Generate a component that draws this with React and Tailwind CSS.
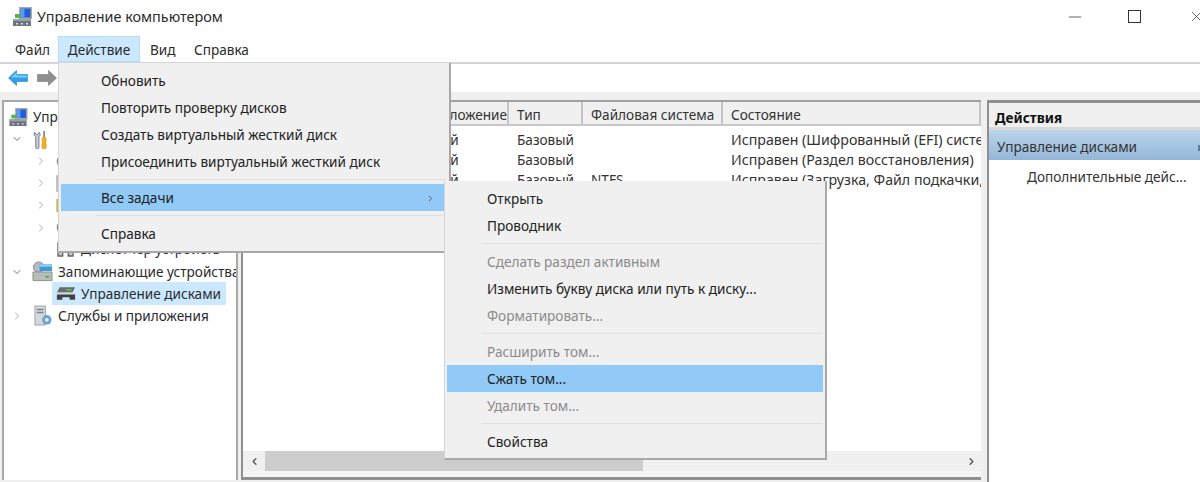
import React from "react";
import { ChevronDown, ChevronRight, ChevronLeft, Minus, X } from "lucide-react";

// --- Icons ---
const ComputerIcon = ({ className }) => (
  <svg viewBox="0 0 20 21" className={className}>
    <rect x="7" y="1" width="13" height="12" fill="#a9a9a0" />
    <rect x="8.5" y="2.5" width="10" height="9" fill="#1f5fd8" />
    <path d="M8.5 2.5h4v9h-4z" fill="#5b9bf0" />
    <path d="M3 8h5v4H3z" fill="#5fb04f" />
    <path d="M1 13h18v7H1z" fill="#6c7480" />
    <path d="M1 13h18v2H1z" fill="#9aa3ad" />
    <path d="M4 17h2v1.500H4zM9 17h2v1.500H9zM14 17h2v1.500h-2z" fill="#d8dde2" />
  </svg>
);

const ToolsIcon = ({ className }) => (
  <svg viewBox="0 0 16 21" className={className}>
    <path d="M1.500 2.500 3 5l2 0 1.500-2.500C8 4 8 6.500 6.300 7.500V19a1.800 1.800 0 0 1-3.600 0V7.500C1 6.500 .5 4 1.500 2.500z" fill="#c9ccd0" stroke="#74787d" strokeWidth="1" />
    <path d="M11 1h2v7h-2z" fill="#8a8d90" />
    <path d="M10.500 8h3l1 2.500-.6 2 .6 6.500a2.500 2 0 0 1-5 0l.6-6.500-.6-2z" fill="#f0b020" stroke="#c98a10" strokeWidth=".6" />
  </svg>
);

const StorageIcon = ({ className }) => (
  <svg viewBox="0 0 22 21" className={className}>
    <circle cx="7" cy="6" r="5.500" fill="#b4bbc0" stroke="#7f878d" />
    <path d="M8 3h13v7H8z" fill="#3f9bd8" />
    <path d="M8 3h13v2.500H8z" fill="#8fd0f0" />
    <path d="M1 11h20v9H1z" fill="#b9bdb8" stroke="#8c908c" />
    <path d="M14 15h4v2h-4z" fill="#4fb04a" />
  </svg>
);

const DiskIcon = ({ className }) => (
  <svg viewBox="0 0 22 16" className={className}>
    <path d="M4 1h17l-3 6H1z" fill="#6a6d70" />
    <path d="M11 3h6v2h-6z" fill="#55c050" />
    <path d="M2 7h18v2H2z" fill="#d5d8da" />
    <path d="M1 9h20v6h-6v-3H7v3H1z" fill="#3f4245" />
  </svg>
);

const ServicesIcon = ({ className }) => (
  <svg viewBox="0 0 20 22" className={className}>
    <path d="M1 1h11v20H1z" fill="#d5d9dd" stroke="#9aa0a5" />
    <path d="M3 4h7v1.500H3zM3 7h7v1.500H3z" fill="#7d858c" />
    <circle cx="13.500" cy="15.500" r="5" fill="#6ea4d0" />
    <circle cx="13.500" cy="15.500" r="2" fill="#e6eef5" />
  </svg>
);

const FolderIcon = ({ className }) => (
  <svg viewBox="0 0 18 16" className={className}>
    <path d="M1 2h6l2 2h8v11H1z" fill="#e8c860" stroke="#b89a3a" />
  </svg>
);

const ClockIcon = ({ className }) => (
  <svg viewBox="0 0 18 18" className={className}>
    <circle cx="9" cy="9" r="7.500" fill="#e8e8e8" stroke="#8a8a8a" strokeWidth="1.500" />
  </svg>
);

const ViewerIcon = ({ className }) => (
  <svg viewBox="0 0 18 18" className={className}>
    <rect x="1" y="1" width="15" height="16" fill="#ececec" stroke="#8a8a8a" />
  </svg>
);

const DeviceIcon = ({ className }) => (
  <svg viewBox="0 0 18 16" className={className}>
    <path d="M1 1h16v14h-5v-5H6v5H1z" fill="#c8c8c8" stroke="#666" strokeWidth="1.500" />
  </svg>
);

const BackArrow = () => (
  <svg viewBox="0 0 20 16" className="w-5 h-4">
    <path d="M0.500 8 8.500 .5v4h11v7h-11v4z" fill="#2f9fea" stroke="#1c85d2" strokeWidth=".6" />
    <path d="M3 7.500 8.500 2.500v3h10.500v2z" fill="#7dcbf8" />
  </svg>
);

const ForwardArrow = () => (
  <svg viewBox="0 0 20 16" className="w-5 h-4">
    <path d="M19.500 8 11.500 .5v4H.5v7h11v4z" fill="#8f8f8f" stroke="#777" strokeWidth=".6" />
  </svg>
);

// --- Data ---
const COLUMNS = [
  { label: "Том", width: "w-[152px]", pad: "pl-[8px]" },
  { label: "Расположение", width: "w-[114px]", pad: "pl-[16px]" },
  { label: "Тип", width: "w-[74px]", pad: "pl-[8px]" },
  { label: "Файловая система", width: "w-[140px]", pad: "pl-[8px]" },
  { label: "Состояние", width: "flex-1", pad: "pl-[8px]" },
];

const VOLUMES = [
  ["(Диск 0 раздел 1)", "Простой", "Базовый", "", "Исправен (Шифрованный (EFI) системный раздел)"],
  ["(Диск 0 раздел 4)", "Простой", "Базовый", "", "Исправен (Раздел восстановления)"],
  ["(C:)", "Простой", "Базовый", "NTFS", "Исправен (Загрузка, Файл подкачки, Аварийный дамп)"],
];

const MENU_ACTION = [
  { label: "Обновить" },
  { label: "Повторить проверку дисков" },
  { label: "Создать виртуальный жесткий диск" },
  { label: "Присоединить виртуальный жесткий диск" },
  { sep: true },
  { label: "Все задачи", active: true, arrow: true },
  { sep: true },
  { label: "Справка" },
];

const MENU_TASKS = [
  { label: "Открыть" },
  { label: "Проводник" },
  { sep: true },
  { label: "Сделать раздел активным", disabled: true },
  { label: "Изменить букву диска или путь к диску..." },
  { label: "Форматировать...", disabled: true },
  { sep: true },
  { label: "Расширить том...", disabled: true },
  { label: "Сжать том...", active: true },
  { label: "Удалить том...", disabled: true },
  { sep: true },
  { label: "Свойства" },
];

const Menu = ({ items, className }) => (
  <div className={`absolute z-10 bg-[#f0f0f0] border-r-2 border-b-2 border-l border-[#a8a8a8] border-l-[#d4d4d4] pt-[4px] pb-[3px] px-[2px] ${className}`}>
    {items.map((item, i) =>
      item.sep ? (
        <div key={i} className="h-[9px] flex items-center pl-[35px] pr-[1px]">
          <div className="h-px w-full bg-[#e0e0e0]" />
        </div>
      ) : (
        <div
          key={i}
          className={`relative h-[27px] flex items-center pl-[40px] pt-px ${item.active ? "bg-[#91c9f7]" : ""} ${item.disabled ? "text-[#8b8b8b]" : "text-[#222]"}`}
        >
          {item.label}
          {item.arrow && <ChevronRight size={9} strokeWidth={2.5} className="absolute right-[12px] text-[#555]" />}
        </div>
      )
    )}
  </div>
);

const TreeRow = ({ indent, chevron, icon, label, labelClass = "pl-[5px]" }) => (
  <div className={`h-[22.1px] flex items-center whitespace-nowrap ${indent}`}>
    <span className="w-[21px] -ml-[4px] shrink-0 text-[#777]">
      {chevron === "open" && <ChevronDown size={12} strokeWidth={2} />}
      {chevron === "closed" && <ChevronRight size={12} strokeWidth={2} className="text-[#aaa]" />}
    </span>
    {icon}
    <span className={labelClass}>{label}</span>
  </div>
);

export default function App() {
  return (
    <div className="relative w-[1200px] h-[482px] overflow-hidden bg-[#f0f0f0] font-['Noto_Sans',sans-serif] text-[13.6px] text-[#2b2b2b]">
      {/* Title bar */}
      <div className="h-[36px] bg-white flex items-center pl-[12px] pb-[3px]">
        <ComputerIcon className="w-[20px] h-[21px]" />
        <span className="ml-[5px] text-[14.4px]">Управление компьютером</span>
        <div className="ml-auto flex items-center text-[#333]">
          <Minus size={16} strokeWidth={1} className="mr-[45px] scale-x-125" />
          <div className="w-[13px] h-[13px] border border-[#333] mr-[47px]" />
          <X size={17} strokeWidth={1} className="-mr-[5px]" />
        </div>
      </div>

      {/* Menu bar */}
      <div className="h-[28px] bg-white flex items-center border-b-2 border-[#d5d5d5] pl-[15px] pt-[3px]">
        <span className="w-[43px]">Файл</span>
        <span className="self-start -mt-[3px] h-[26px] w-[82px] pt-[2px] flex items-center justify-center bg-[#cce8ff] border border-[#b5dcfa]">Действие</span>
        <span className="ml-[10px] w-[44px]">Вид</span>
        <span>Справка</span>
      </div>

      {/* Toolbar */}
      <div className="h-[28px] bg-white flex items-center pl-[8px] gap-[9px]">
        <BackArrow />
        <ForwardArrow />
      </div>

      {/* Panels */}
      <div className="h-[390px] pt-[8px] flex">
        <div className="w-[236px] ml-[2px] mr-[3px] mb-[2px] bg-white border-l-2 border-t-2 border-r-2 border-[#a8a8a8] pl-[2px] pt-[4px] overflow-hidden">
          <TreeRow indent="pl-0" icon={<ComputerIcon className="w-[20px] h-[20px] -ml-[15px] shrink-0" />} label="Управление компьютером (локальным)" />
          <TreeRow indent="pl-[9px]" chevron="open" icon={<ToolsIcon className="w-[15px] h-[19px] ml-px shrink-0" />} label="Служебные программы" labelClass="pl-[10px]" />
          <TreeRow indent="pl-[33px]" chevron="closed" icon={<ClockIcon className="w-[17px] h-[17px] shrink-0" />} label="Планировщик заданий" />
          <TreeRow indent="pl-[33px]" chevron="closed" icon={<ViewerIcon className="w-[17px] h-[17px] shrink-0" />} label="Просмотр событий" />
          <TreeRow indent="pl-[33px]" chevron="closed" icon={<FolderIcon className="w-[17px] h-[16px] shrink-0" />} label="Общие папки" />
          <TreeRow indent="pl-[33px]" chevron="closed" icon={<ClockIcon className="w-[17px] h-[17px] shrink-0" />} label="Производительность" />
          <TreeRow indent="pl-[33px]" icon={<DeviceIcon className="w-[17px] h-[15px] ml-px shrink-0" />} label="Диспетчер устройств" labelClass="pl-[7px]" />
          <TreeRow indent="pl-[9px]" chevron="open" icon={<StorageIcon className="w-[21px] h-[21px] shrink-0" />} label="Запоминающие устройства" />
          <div className="h-[22.1px] pl-[46px] flex items-center whitespace-nowrap">
            <div className="h-[23px] w-[174px] bg-[#cce8ff] flex items-center pl-[4px]">
              <DiskIcon className="w-[20px] h-[15px] shrink-0" />
              <span className="pl-[5px]">Управление дисками</span>
            </div>
          </div>
          <TreeRow indent="pl-[9px]" chevron="closed" icon={<ServicesIcon className="w-[19px] h-[21px] ml-[2px] shrink-0" />} label="Службы и приложения" />
        </div>

        {/* Volumes list */}
        <div className="w-[740px] mb-[2px] bg-white border-l-2 border-t-2 border-b-[3px] border-[#8f8f8f] border-t-[#a0a0a0] flex flex-col">
          <div className="h-[24px] flex bg-[#f0f0f0] border-b-2 border-[#c8c8c8] shrink-0">
            {COLUMNS.map((col) => (
              <div key={col.label} className={`${col.width} ${col.pad} pt-[5px] flex items-center border-r-2 border-[#c4c4c4] whitespace-nowrap text-[#333]`}>
                {col.label}
              </div>
            ))}
          </div>
          <div className="flex-1 pt-[4px] min-h-0">
            {VOLUMES.map((row) => (
              <div key={row[0]} className="h-[20px] flex">
                {row.map((cell, i) => (
                  <div key={i} className={`${COLUMNS[i].width} ${i === 4 ? "text-[14.2px]" : ""} pl-[8px] whitespace-nowrap overflow-hidden text-[#333] flex items-center`}>
                    {cell}
                  </div>
                ))}
              </div>
            ))}
          </div>
          {/* Horizontal scrollbar */}
          <div className="h-[20px] bg-[#f0f0f0] flex items-center shrink-0">
            <span className="w-[22px] flex justify-center text-[#555]"><ChevronLeft size={11} strokeWidth={3} /></span>
            <div className="w-[378px] h-full bg-[#cdcdcd]" />
            <span className="ml-auto w-[20px] flex justify-center text-[#555]"><ChevronRight size={11} strokeWidth={3} /></span>
          </div>
          <div className="h-[6px] bg-[#f5f5f5] shrink-0" />
        </div>

        {/* Actions */}
        <div className="ml-[6px] flex-1 bg-white border-l-2 border-t-[3px] border-[#8f8f8f] flex flex-col">
          <div className="h-[24px] flex items-center pl-[6px] pt-[6px] font-bold bg-[#f0f0f0] text-[#111]">Действия</div>
          <div className="h-[3px] bg-[#d8d8d8]" />
          <div className="h-[30px] flex items-center pl-[8px] pt-[5px] bg-linear-to-b from-[#bcd6ec] to-[#94b6d7] text-[#333]">
            Управление дисками
            <span className="ml-auto w-[2px] h-[6px] bg-[#5a7fa5]" />
          </div>
          <div className="h-[34px] flex items-center pl-[38px] text-[#333]">Дополнительные дейс...</div>
        </div>
      </div>

      {/* Open menus */}
      <Menu items={MENU_ACTION} className="left-[58px] top-[63px] w-[393px] h-[190px]" />
      <Menu items={MENU_TASKS} className="left-[444px] top-[181px] w-[383px] z-20" />
    </div>
  );
}
